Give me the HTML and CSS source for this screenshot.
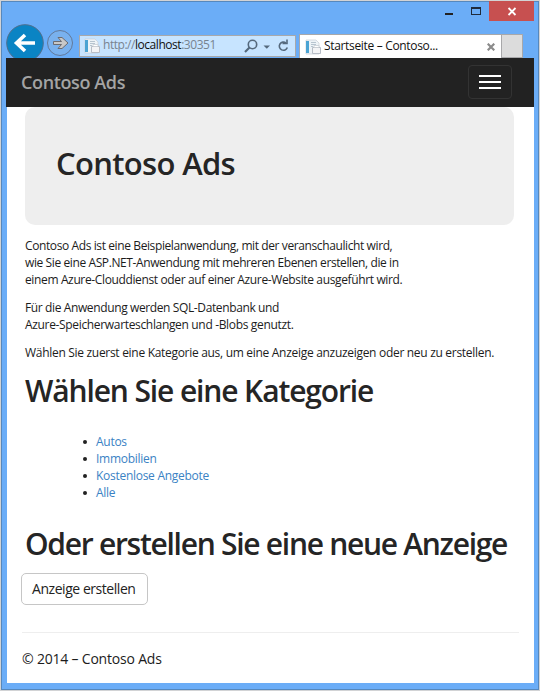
FILE: index.html
```html
<!DOCTYPE html>
<html lang="de">
<head>
<meta charset="utf-8">
<title>Startseite – Contoso Ads</title>
<link rel="stylesheet" href="styles.css">
</head>
<body>
<div class="window">
  <header class="chrome">
    <div class="controls">
      <svg class="minmax" width="54" height="20" viewBox="0 0 54 20"><path d="M10 12h8v2h-8z" fill="#222"/><path d="M36 6h10v8H36zM37 8v5h8V8z" fill="#1f2b3c" fill-rule="evenodd"/></svg>
      <div class="close"><svg width="45" height="20" viewBox="0 0 45 20"><path d="M19.5 7l7 7M26.5 7l-7 7" stroke="#fff" stroke-width="1.8"/></svg></div>
    </div>
    <div class="toolbar">
      <svg class="nav-buttons" width="70" height="38" viewBox="0 0 70 38">
        <circle cx="19" cy="23" r="18.300" fill="#0a84c4" stroke="#506f8d"/>
        <path d="M29 23H11M19 15L10.500 23L19 31" fill="none" stroke="#fff" stroke-width="3.600"/>
        <circle cx="54" cy="23" r="12.500" fill="#79b1ee" stroke="#62799a"/>
        <path d="M47.500 21.500h8L52 17.500h4l6 5.500-6 5.500h-4l3.500-4h-8z" fill="#c8c8c8" stroke="#6b6b70"/>
      </svg>
      <div class="address">
        <svg class="page-icon" width="16" height="16" viewBox="0 0 16 16"><path d="M1 1h10l3 3v11H1z" fill="#eef3f7" stroke="#c8ced5" stroke-width=".7"/><path d="M1 2h3v12H1z" fill="#4aa3d3"/><path d="M6 3.500h5M6 5.500h5M6 7.500h2" stroke="#b7c4cf"/><path d="M7.500 8.500h8v6h-8z" fill="#f4f4f6" stroke="#b7bdc6"/><path d="M9 6.500h5v2H9z" fill="#fff" stroke="#c3c9d0" stroke-width=".7"/></svg>
        <span class="url">http://<b>localhost</b>:30351</span>
        <svg class="address-tools" width="50" height="20" viewBox="0 0 50 20" fill="none" stroke="#55697d">
          <circle cx="8.500" cy="8.500" r="4.200" stroke-width="1.600"/><path d="M5.500 11.500L1 16" stroke-width="2.200"/>
          <path d="M19.500 9.500h6.500l-3.200 3.200z" fill="#55697d" stroke="none"/>
          <path d="M42 7A4.100 4.100 0 1 0 43.300 11.500" stroke-width="1.600"/><path d="M38.500 7.500h4.500V3.500" stroke-width="1.600"/>
        </svg>
      </div>
      <div class="tab">
        <svg class="page-icon" width="16" height="16" viewBox="0 0 16 16"><path d="M1 1h10l3 3v11H1z" fill="#eef3f7" stroke="#c8ced5" stroke-width=".7"/><path d="M1 2h3v12H1z" fill="#4aa3d3"/><path d="M6 3.500h5M6 5.500h5M6 7.500h2" stroke="#b7c4cf"/><path d="M7.500 8.500h8v6h-8z" fill="#f4f4f6" stroke="#b7bdc6"/><path d="M9 6.500h5v2H9z" fill="#fff" stroke="#c3c9d0" stroke-width=".7"/></svg>
        <span class="tab-title">Startseite – Contoso...</span>
        <svg class="tab-close" width="8" height="8" viewBox="0 0 8 8"><path d="M.7.7l6.600 6.600M7.300.7L.7 7.300" stroke="#8b8b8b" stroke-width="2.200"/></svg>
      </div>
      <div class="new-tab"></div>
    </div>
  </header>
  <nav class="navbar">
    <span class="brand">Contoso Ads</span>
    <div class="toggle"><i></i><i></i><i></i></div>
  </nav>
  <main class="page">
    <section class="jumbotron"><h1>Contoso Ads</h1></section>
    <p class="intro">Contoso Ads ist eine Beispielanwendung, mit der veranschaulicht wird,<br>wie Sie eine ASP.NET-Anwendung mit mehreren Ebenen erstellen, die in<br><span class="wide">einem Azure-Clouddienst oder auf einer Azure-Website ausgeführt wird.</span></p>
    <p>Für die Anwendung werden SQL-Datenbank und<br><span class="wider">Azure-Speicherwarteschlangen und -Blobs genutzt.</span></p>
    <p class="prompt">Wählen Sie zuerst eine Kategorie aus, um eine Anzeige anzuzeigen oder neu zu erstellen.</p>
    <h2 class="choose">Wählen Sie eine Kategorie</h2>
    <ul class="categories">
      <li><a>Autos</a></li>
      <li><a>Immobilien</a></li>
      <li><a>Kostenlose Angebote</a></li>
      <li><a>Alle</a></li>
    </ul>
    <h2 class="create">Oder erstellen Sie eine neue Anzeige</h2>
    <button class="button">Anzeige erstellen</button>
    <footer>© 2014 – Contoso Ads</footer>
  </main>
</div>
</body>
</html>
```
FILE: styles.css
```css
* { box-sizing: border-box; }
body { margin: 0; background: #d2d3d5; font: 12px/17px "Open Sans", "Noto Sans", sans-serif; color: #1c1c1c; overflow: hidden; }
svg { display: block; flex: none; }
.window { width: 538px; height: 689px; margin: 1px; border: 1px solid #5688bd; background: #6badf7; padding: 0 4px 6px 5px; display: flex; flex-direction: column; }
.chrome { height: 56px; display: flex; flex-direction: column; flex: none; }
.controls { display: flex; justify-content: flex-end; height: 19px; margin-top: -1px; }
.close { background: #c75050; height: 20px; width: 45px; }
.toolbar { display: flex; align-items: flex-end; height: 38px; overflow: hidden; margin-left: -1px; }
.nav-buttons { align-self: flex-start; }
.address { width: 217px; height: 22px; margin: 0 0 1px 3px; border: 1px solid #a8a8aa; background: #c7e4ff; display: flex; align-items: center; padding-left: 4px; flex: none; }
.url { color: #77838f; margin: -3px 0 0 3px; width: 141px; letter-spacing: -.46px; white-space: nowrap; flex: none; }
.url b { font-weight: 400; color: #111; }
.tab { width: 203px; height: 24px; margin-left: 3px; border: 1px solid #a8a8aa; border-bottom: 0; background: #fff; display: flex; align-items: center; padding-left: 5px; flex: none; }
.tab-title { margin: -2px 0 0 3px; width: 163px; letter-spacing: -.33px; white-space: nowrap; color: #111; flex: none; }
.tab-close { margin-top: 1px; }
.new-tab { width: 21px; height: 24px; border: 1px solid #a8a8aa; border-left: 0; background: #dcdcdc; flex: none; }
.navbar { background: #222; height: 49px; display: flex; align-items: center; justify-content: space-between; padding: 0 22px 0 15px; margin-left: -1px; flex: none; }
.brand { color: #a4a4a4; font-weight: 600; font-size: 18px; letter-spacing: -.38px; }
.toggle { width: 44px; height: 34px; margin-top: -1px; border: 1px solid #333; border-radius: 4px; display: flex; flex-direction: column; gap: 4px; padding: 9px 10px; }
.toggle i { height: 2px; background: #fff; }
.page { background: #fff; height: 576px; padding: 0 15px; }
.jumbotron { margin: 0 5px 12px 3px; height: 118px; border-radius: 10px; background: #eee; padding: 40px 31px; }
h1, h2 { margin: 0; font-size: 30px; line-height: 33px; font-weight: 600; color: #252525; white-space: nowrap; }
h1 { font-size: 31px; letter-spacing: -.67px; }
p { margin: 0 0 11px 3px; letter-spacing: -.38px; white-space: nowrap; }
.intro { letter-spacing: -.395px; }
.wide { letter-spacing: -.366px; }
.wider { letter-spacing: -.334px; }
.prompt { letter-spacing: -.3px; margin-bottom: 13px; }
.choose { margin-left: 3px; letter-spacing: -1.12px; }
.create { margin-left: 3px; letter-spacing: -1.28px; }
.categories { margin: 26px 0; padding-left: 74px; list-style: none; }
.categories li { display: flex; align-items: center; height: 17px; letter-spacing: -.28px; }
.categories li::before { content: ""; width: 4px; height: 4px; border-radius: 50%; background: #222; margin: 0 9px 0 -13px; }
.categories a { color: #3a82c4; }
.button { display: block; margin: 13px 0 27px -1px; width: 127px; height: 32px; border: 1px solid #c6c6c6; border-radius: 5px; background: #fff; font: 14px/20px "Open Sans", sans-serif; letter-spacing: -.45px; color: #222; padding: 0 10px; text-align: left; white-space: nowrap; }
footer { border-top: 1px solid #eee; padding-top: 16px; font-size: 14px; line-height: 20px; letter-spacing: -.2px; }
```
